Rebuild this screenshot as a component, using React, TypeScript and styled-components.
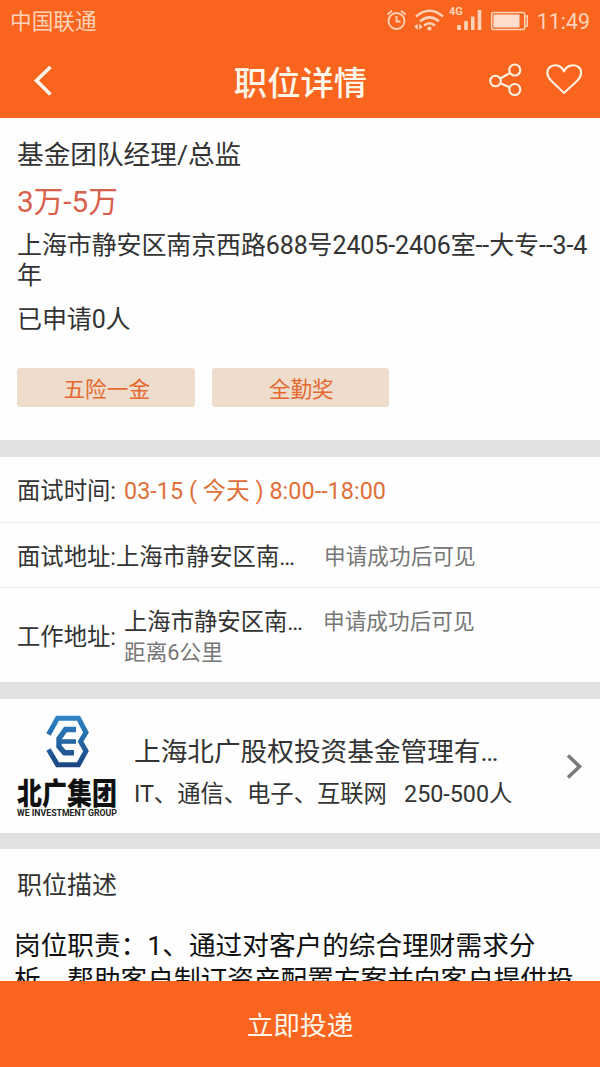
import React from 'react';
import styled, { createGlobalStyle } from 'styled-components';

const Global = createGlobalStyle`
  * { box-sizing: border-box; }
  body { margin: 0; background: #fefefe; font-family: Roboto, "Noto Sans CJK SC", sans-serif; }
`;

const Screen = styled.div`
  width: 600px;
  height: 1067px;
  display: flex;
  flex-direction: column;
  overflow: hidden;
  background: #fefefe;
`;

const Text = styled.div<{ $size: number; $line: number; $color?: string; $weight?: number; $spacing?: number }>`
  font-size: ${(p) => p.$size}px;
  line-height: ${(p) => p.$line}px;
  color: ${(p) => p.$color ?? '#333'};
  font-weight: ${(p) => p.$weight ?? 400};
  letter-spacing: ${(p) => p.$spacing ?? 0}px;
  white-space: pre;
`;

const Top = styled.header`
  flex: none;
  height: 118px;
  background: #f9651e;
`;

const StatusBar = styled.div`
  height: 42px;
  padding: 2px 10px 0 10px;
  display: flex;
  align-items: center;
  justify-content: space-between;
`;

const StatusIcons = styled.div`
  display: flex;
  align-items: center;
  gap: 7px;
`;

const NavBar = styled.div`
  height: 76px;
  padding: 0 17px 0 32px;
  display: grid;
  grid-template-columns: 93px 1fr 107px;
  align-items: center;
  justify-items: center;
  > :first-child { justify-self: start; }
  > :last-child { justify-self: end; }
`;

const NavTitle = styled(Text)`
  padding-top: 5px;
`;

const NavActions = styled.div`
  display: flex;
  align-items: center;
  gap: 23px;
`;

const Summary = styled.section`
  flex: none;
  height: 322px;
  padding: 20px 0 0 17px;
`;

const Tags = styled.div`
  display: flex;
  gap: 17px;
  margin-top: 20px;
`;

const Tag = styled.div`
  width: 177.5px;
  height: 39px;
  border-radius: 3px;
  background: #eedccd;
  color: #e5692f;
  font-size: 21.67px;
  line-height: 43px;
  text-align: center;
  padding-left: 2px;
`;

const Gap = styled.div<{ $height: number }>`
  flex: none;
  height: ${(p) => p.$height}px;
  background: #e2e0e1;
`;

const Row = styled.div<{ $height: number; $shift: number; $last?: boolean }>`
  flex: none;
  height: ${(p) => p.$height}px;
  padding: ${(p) => p.$shift}px 0 0 17px;
  display: flex;
  align-items: center;
  border-bottom: 1px solid ${(p) => (p.$last ? 'transparent' : '#ececec')};
`;

const Label = styled(Text)<{ $width: number }>`
  flex: none;
  width: ${(p) => p.$width}px;
`;

const Place = styled.div<{ $width: number }>`
  flex: none;
  width: ${(p) => p.$width}px;
`;

const Note = styled(Text)<{ $top?: boolean }>`
  align-self: ${(p) => (p.$top ? 'flex-start' : 'center')};
  margin-top: ${(p) => (p.$top ? 13 : 0)}px;
`;

const Company = styled.section`
  flex: none;
  height: 134px;
  padding: 0 17px;
  display: flex;
  align-items: center;
`;

const CompanyInfo = styled.div`
  flex: 1;
  padding: 14px 0 0 16px;
`;

const Description = styled.section`
  flex: none;
  height: 132px;
  overflow: hidden;
  padding: 21px 0 0 17px;
`;

const Body = styled.div`
  margin: 28px 0 0 -3px;
`;

const Apply = styled.button`
  flex: none;
  height: 86px;
  padding: 0 0 1px;
  border: 0;
  background: #f9651e;
  color: #fff6ea;
  font: 400 26.67px Roboto, "Noto Sans CJK SC", sans-serif;
`;

const PALE = '#ffd3b8';

const StatusGlyphs = () => (
  <svg width="144" height="34" viewBox="386 5 144 34" fill="none" stroke={PALE}>
    <circle cx="396.500" cy="21" r="8" strokeWidth="1.8" />
    <path d="M396.500 16v5.500h4M387.500 14.500l4.500-3.800M405.500 14.500l-4.500-3.800" strokeWidth="1.8" />
    <path d="M416 16.500q13.500-11.500 27 0M420 21.300q9.500-8 19 0M424 25.500q5.500-4.500 11 0" strokeWidth="2.600" />
    <circle cx="429.500" cy="28.500" r="2.100" fill={PALE} stroke="none" />
    <path d="M417.700 23.800v6l-3.600-3zM419.200 23.800v6l3.600-3z" fill={PALE} stroke="none" />
    <path d="M459 25V30M466 21V30M472.800 16.500V30M479.500 10V30" strokeWidth="3.600" />
    <text x="449" y="15" fontSize="11" fontWeight="700" fontFamily="Roboto" fill={PALE} stroke="none">4G</text>
    <rect x="491.700" y="12.500" width="33" height="17" rx="1.500" strokeWidth="1.500" />
    <rect x="493.500" y="14.500" width="26" height="13" fill="#ffdccb" stroke="none" />
    <path d="M525 16h2.200v10H525" strokeWidth="1.500" />
  </svg>
);

const BackIcon = () => (
  <svg width="24" height="32" viewBox="32 64 24 32" fill="none" stroke="#fff6ea" strokeWidth="3.600">
    <path d="M50.500 66L36.500 79.500L50.500 93.500" />
  </svg>
);

const ShareIcon = () => (
  <svg width="34" height="36" viewBox="488.500 60.500 34 36" fill="none" stroke="#fff0e0" strokeWidth="2.100">
    <circle cx="496" cy="78.500" r="5.300" />
    <circle cx="515.300" cy="67.500" r="5.500" />
    <circle cx="515.300" cy="87" r="5.500" />
    <path d="M500.800 76L510.500 70.500M500.800 80.800L510.500 85" />
  </svg>
);

const HeartIcon = () => (
  <svg width="38" height="36" viewBox="545 61.5 38 36" fill="none" stroke="#fff0e0" strokeWidth="2.100" strokeLinejoin="round">
    <path d="M564 91.500L551 79C546 74 546.500 68 550.500 65.200C555.500 62 562 64.500 564 70C566 64.500 573 62 578 65.200C582 68 582.500 74 577.500 79Z" />
  </svg>
);

const CompanyLogo = () => (
  <svg width="101" height="106" viewBox="17 713 101 106" overflow="visible">
    <defs>
      <linearGradient id="blue" gradientUnits="userSpaceOnUse" x1="0" y1="716" x2="0" y2="768">
        <stop offset="0" stopColor="#2f86c6" />
        <stop offset="1" stopColor="#1b4480" />
      </linearGradient>
    </defs>
    <g fill="none" stroke="url(#blue)" strokeWidth="5">
      <path d="M48.500 734.500L57.500 718.300H78.500L86 732.500L80.500 741.500L86 751L78.500 764.700H57.500L48.500 749.500" />
      <path d="M76 729.500H65.500L59 738.500V746.500L64.500 752.800H74" strokeWidth="5.400" />
      <path d="M59 741.500H76" strokeWidth="4.600" />
    </g>
    <text x="17" y="804.200" fontSize="30" fontWeight="900" fontFamily="Noto Sans CJK SC" textLength="100" lengthAdjust="spacingAndGlyphs" fill="#111">北广集团</text>
    <text x="17" y="815.600" fontSize="9" fontWeight="700" fontFamily="Roboto" textLength="100" lengthAdjust="spacingAndGlyphs" fill="#222">WE INVESTMENT GROUP</text>
  </svg>
);

const ChevronIcon = () => (
  <svg width="18" height="28" viewBox="566 752 18 28" fill="none" stroke="#7b7b7b" strokeWidth="3.600">
    <path d="M569 755.500L580.500 766.500L569 777.500" />
  </svg>
);

export default function App() {
  return (
    <Screen>
      <Global />
      <Top>
        <StatusBar>
          <Text $size={21.67} $line={42} $color={PALE}>中国联通</Text>
          <StatusIcons>
            <StatusGlyphs />
            <Text $size={21.4} $line={42} $color={PALE}>11:49</Text>
          </StatusIcons>
        </StatusBar>
        <NavBar>
          <BackIcon />
          <NavTitle $size={33.33} $line={73} $color="#fff6ea" $weight={500}>职位详情</NavTitle>
          <NavActions>
            <ShareIcon />
            <HeartIcon />
          </NavActions>
        </NavBar>
      </Top>
      <Summary>
        <Text $size={26.67} $line={34}>基金团队经理/总监</Text>
        <Text $size={29.7} $line={59}  $color="#d9604c">3万-5万</Text>
        <Text $size={25} $line={30} $spacing={-0.12}>{'上海市静安区南京西路688号2405-2406室--大专--3-4\n年'}</Text>
        <Text $size={25} $line={57} $spacing={-0.12}>已申请0人</Text>
        <Tags>
          <Tag>五险一金</Tag>
          <Tag>全勤奖</Tag>
        </Tags>
      </Summary>
      <Gap $height={17} />
      <Row $height={66} $shift={2}>
        <Label $size={23.33} $line={40} $width={107}>面试时间:</Label>
        <Text $size={23.33} $line={40} $color="#e07038" $spacing={0.05}>03-15 ( 今天 ) 8:00--18:00</Text>
      </Row>
      <Row $height={65} $shift={4}>
        <Label $size={23.33} $line={40} $width={307}>面试地址:上海市静安区南…</Label>
        <Note $size={21.67} $line={40} $color="#777">申请成功后可见</Note>
      </Row>
      <Row $height={94} $shift={5} $last>
        <Label $size={23.33} $line={40} $width={107}>工作地址:</Label>
        <Place $width={199}>
          <Text $size={23.33} $line={30}>上海市静安区南…</Text>
          <Text $size={21.67} $line={31} $color="#777">距离6公里</Text>
        </Place>
        <Note $size={21.67} $line={32} $color="#777" $top>申请成功后可见</Note>
      </Row>
      <Gap $height={17} />
      <Company>
        <CompanyLogo />
        <CompanyInfo>
          <Text $size={26.67} $line={42}>上海北广股权投资基金管理有…</Text>
          <Text $size={23.33} $line={42} $spacing={-0.03}>IT、通信、电子、互联网   250-500人</Text>
        </CompanyInfo>
        <ChevronIcon />
      </Company>
      <Gap $height={16} />
      <Description>
        <Text $size={25} $line={32}>职位描述</Text>
        <Body>
          <Text $size={26.67} $line={33.5} $color="#111">{'岗位职责：1、通过对客户的综合理财需求分\n析，帮助客户制订资产配置方案并向客户提供投'}</Text>
        </Body>
      </Description>
      <Apply>立即投递</Apply>
    </Screen>
  );
}
